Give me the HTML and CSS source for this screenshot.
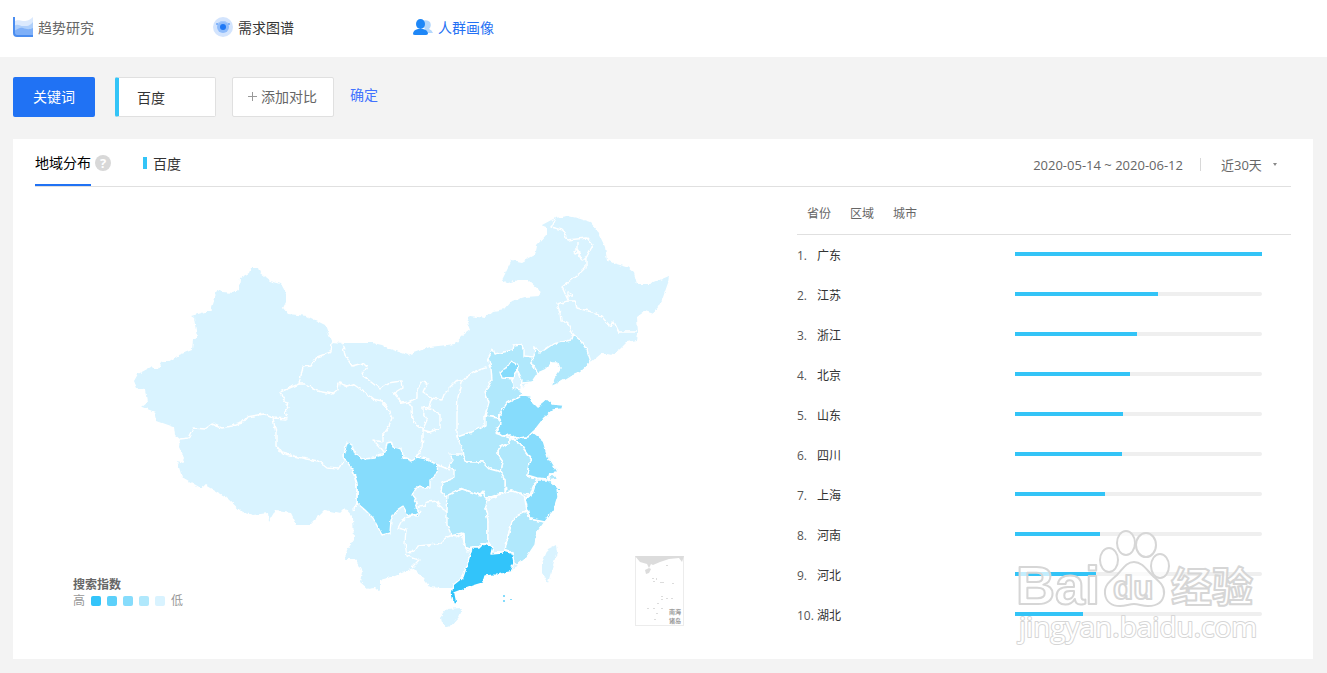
FILE: index.html
```html
<!DOCTYPE html>
<html lang="zh-CN">

<head>
    <meta charset="UTF-8">
    <meta name="viewport" content="width=device-width, initial-scale=1.0">
    <title>人群画像</title>
    <link rel="stylesheet" href="styles.css">
</head>

<body>

    <nav class="nav">
        <a href="#" class="nav-item muted">
            <svg width="20" height="20" viewBox="0 0 20 20">
                <path fill="#dbe9fd" d="M1 5c4-3 6-1 9-1s6 0 10-4v18H1z" />
                <path fill="#aecffb" d="M1 9c4-3 6 0 9 0s6 1 10-4v12H1z" />
                <path fill="#7fb0f8" d="M1 14c4-2 6-4 9-3s6 2 10 0v8H1z" />
                <path fill="none" stroke="#4a8df0" stroke-width="2" d="M1 0v16q0 3 3 3h16" />
            </svg>
            趋势研究
        </a>
        <a href="#" class="nav-item">
            <svg width="20" height="20" viewBox="0 0 20 20">
                <circle cx="10" cy="10" r="10" fill="#d3e4fd" />
                <circle cx="10" cy="10" r="6" fill="#8fbcfb" />
                <circle cx="10" cy="10" r="3" fill="#1f78f5" />
                <path fill="none" stroke="#a9cbfb" d="M4 7q6-5 12 0" />
                <circle cx="4" cy="7" r="1" fill="#6fa8f8" />
                <circle cx="16" cy="7" r="1" fill="#6fa8f8" />
            </svg>
            需求图谱
        </a>
        <a href="#" class="nav-item active">
            <svg width="20" height="20" viewBox="0 0 20 20">
                <path fill="#b5d8fc" d="M9 4q5-2 8 1 2 4-1 7 3 1 4 4h-7z" />
                <ellipse cx="7.500" cy="7" rx="4.500" ry="5" fill="#1e87f7" />
                <path fill="#1e87f7" d="M0 17q0-4 5-5h5q5 1 5 5-1 1-2 1H2q-2 0-2-1z" />
            </svg>
            人群画像
        </a>
    </nav>

    <form class="search">
        <button type="button" class="btn-key">关键词</button>
        <input type="text" class="word" value="百度" aria-label="关键词">
        <button type="button" class="btn-add">
            <svg width="10" height="10" viewBox="0 0 10 10"><path fill="none" stroke="#999" d="M5.500 1v9M1 5.500h9" /></svg>
            添加对比
        </button>
        <a href="#" class="confirm">确定</a>
    </form>

    <div class="panel">
        <div class="panel-head">
            <h3 class="title">地域分布</h3>
            <button type="button" class="help" aria-label="说明">?</button>
            <span class="series">百度</span>
            <div class="period">
                <span>2020-05-14 ~ 2020-06-12</span>
                <i class="line"></i>
                <select class="days" aria-label="时间">
                    <option>近30天</option>
                </select>
                <i class="caret"></i>
            </div>
        </div>

        <div class="content">
            <div class="map-box">
                <svg class="map" viewBox="125 205 560 435">
                    <defs>
                        <filter id="rough" x="0" y="0" width="100%" height="100%">
                            <feTurbulence type="fractalNoise" baseFrequency="0.2" numOctaves="2" seed="4" />
                            <feDisplacementMap in="SourceGraphic" scale="4" xChannelSelector="R" yChannelSelector="G" />
                        </filter>
                    </defs>
                    <g filter="url(#rough)">
                        <!-- mainland -->
                        <path class="l1" d="M134 381L138 374 151 367 153 369 158 369 162 362 168 362 179 355 192 350 193 340 197 337 194 318 191 316 205 312 212 312 211 307 217 290 222 292 234 293 239 290 240 278 249 273 251 268 258 268 260 273 270 281 281 284 286 293 286 302 283 308 288 314 307 316 325 325 328 333 332 342 342 343 353 343 373 343 382 345 390 349 408 355 430 347 455 344 462 336 470 330 467 322 470 316 485 318 493 311 505 309 512 301 525 297 540 296 539 290 528 280 518 280 507 283 502 280 512 260 522 262 535 255 537 245 547 234 547 227 542 225 555 218 568 216 577 218 590 222 597 230 605 247 607 260 613 263 627 267 634 273 637 284 650 284 669 276 668 283 662 300 654 314 645 311 637 317 638 333 637 340 627 342 620 349 612 355 602 353 590 363 580 372 570 376 555 385 551 387 554 378 560 369 558 363 552 363 545 370 538 373 532 382 525 384 521 390 522 395 531 396 533 403 537 407 547 399 553 404 563 405 562 409 553 410 545 418 533 432 543 442 548 455 553 465 557 470 552 473 557 479 550 481 557 488 558 495 555 508 545 522 537 533 533 547 517 565 510 572 485 575 483 583 455 593 457 603 452 603 451 593 452 588 440 588 430 587 423 578 413 568 395 576 380 580 380 592 375 588 368 589 360 582 362 572 355 559 345 559 347 550 354 540 353 517 345 508 340 513 325 510 310 525 297 525 291 513 275 511 269 521 268 513 253 515 242 512 227 498 205 485 201 488 182 477 177 461 182 463 184 458 179 447 180 439 175 435 174 427 157 421 155 412 142 407 147 403 145 389 137 388z" />
                        <!-- hainan, taiwan -->
                        <path class="l1" d="M462 608L458 617 449 627 442 624 441 617 447 609zM556 545L557 552 553 565 548 583 542 573 542 563 548 549z" />
                        <g class="provinces">
                            <!-- hebei -->
                            <path class="l2" d="M493 349L495 354 513 350 514 345 521 344 524 350 524 356 533 357 531 362 538 373 532 382 523 383 521 390 522 395 517 398 507 403 499 416 498 418 485 416 489 402 485 392 492 380 491 368 488 358z" />
                            <!-- liaoning -->
                            <path class="l2" d="M535 347L540 353 553 344 571 340 573 334 580 340 587 350 591 362 580 372 570 376 555 385 551 387 554 378 560 369 558 363 552 363 545 370 538 373 531 362 534 357z" />
                            <!-- henan -->
                            <path class="l2" d="M457 437L472 432 485 425 485 416 498 418 501 424 495 433 510 438 510 443 500 447 497 453 503 462 501 472 490 469 483 462 465 462 463 450z" />
                            <!-- anhui -->
                            <path class="l2" d="M510 438L520 443 528 455 532 460 529 463 527 475 537 478 533 487 530 495 522 494 512 491 506 492 505 480 501 472 503 462 497 453 500 447 510 443z" />
                            <!-- hubei -->
                            <path class="l2" d="M450 454L463 454 465 462 483 462 490 469 501 472 505 480 505 492 488 498 480 495 462 489 457 493 447 497 441 492 442 483 454 478 454 470 449 466 453 460z" />
                            <!-- hunan -->
                            <path class="l2" d="M448 495L462 489 480 495 483 492 488 502 485 508 488 520 488 543 482 544 479 547 472 547 468 551 465 547 464 533 457 537 452 536 447 525 447 510z" />
                            <!-- jiangxi -->
                            <path class="l1" d="M488 500L505 492 512 491 522 494 525 500 527 511 517 516 512 522 508 537 505 551 491 554 493 546 488 543 488 520 485 508z" />
                            <!-- fujian -->
                            <path class="l2" d="M527 511L530 519 545 522 537 533 535 545 527 557 517 565 514 563 512 553 505 550 508 537 512 522 517 516z" />
                            <!-- shandong -->
                            <path class="l3" d="M522 395L531 396 533 403 537 407 547 399 553 404 563 405 562 409 553 410 545 417 535 430 528 437 517 438 510 435 502 436 496 431 501 424 499 416 507 403 517 398z" />
                            <!-- jiangsu -->
                            <path class="l3" d="M510 436L517 438 528 437 533 432 543 440 548 457 554 467 557 472 550 473 548 479 537 478 527 475 529 463 532 460 527 453 520 443z" />
                            <!-- shanghai -->
                            <path class="l2" d="M551 473L558 479 549 481z" />
                            <!-- zhejiang -->
                            <path class="l3" d="M538 480L548 480 557 488 558 497 554 510 545 522 530 519 527 507 525 498 532 495 535 485z" />
                            <!-- beijing, tianjin -->
                            <path class="l3" d="M511 361L518 365 517 373 513 379 502 378 500 372 507 367z" />
                            <path class="l1" d="M516 373L518 371 522 380 521 390 513 388 512 379z" />
                            <!-- sichuan -->
                            <path class="l3" d="M347 442L352 445 355 454 363 459 375 458 378 455 385 453 387 443 391 442 393 447 402 449 403 457 412 461 417 457 427 459 438 465 437 473 430 480 430 488 417 487 412 495 417 502 415 508 420 512 418 516 408 515 403 506 397 510 391 520 390 533 382 535 373 518 365 510 357 503 357 483 352 468 345 460 343 455 345 450z" />
                            <!-- guangdong -->
                            <path class="l5" d="M472 547L479 547 482 544 493 546 491 554 502 553 504 551 512 553 514 563 510 572 497 575 485 576 483 583 473 586 455 593 457 603 453 603 451 594 453 585 463 577 467 565z" />
                        </g>
                        <g class="borders">
                            <path d="M180 439L188 438 193 428 205 429 212 424 222 428 232 426 242 423 247 417 263 414 273 418 287 419 285 412 289 407 282 397 280 392 299 384 303 367 311 366 317 357 331 352 332 343" />
                            <path d="M299 384L305 384 317 391 333 394 338 390 339 383 347 386 353 384 363 391 373 399 382 401 387 407 392 418 388 428 383 435 383 442 373 440 380 447 384 452" />
                            <path d="M273 418L276 433 276 445 282 453 302 458 318 461 327 468 338 469 343 462M353 470L357 487 357 503 353 511" />
                            <path d="M342 343L345 355 352 366 363 363 367 367 362 375 380 389 388 383 401 381 402 388 394 393 402 403 408 402 417 398 417 390 422 382 427 383 423 392 432 398 442 400 445 392 455 382 463 380 473 372 488 367" />
                            <path d="M408 402L412 408 413 422 423 429 427 420 423 413 423 407 429 406 432 398M425 408L433 410 440 415 440 428 430 432 423 430 423 437 422 447 417 457" />
                            <path d="M463 380L458 397 457 413 457 437M438 465L450 470" />
                            <path d="M420 512L402 520 398 528 406 530 405 543 407 556 419 560 412 567M407 552L415 551 418 546 438 544 447 537 462 533 465 547 472 550M415 508L425 506 427 502 437 501 440 507 447 512" />
                            <path d="M555 218L551 227 563 230 567 240 587 238 593 245 586 258 586 267 580 273 562 287 568 300M577 242V250L582 260 586 258M574 251l3-2 2 3-4 2zM568 292l3 1 1 3-4 0z" />
                            <path d="M573 334L567 322 561 322 560 312 557 304 568 301 575 301 577 308 592 312 602 317 610 326 614 322 619 332 637 332" />
                        </g>
                    </g>
                    <path class="l3" d="M503 595h2v2h-2zM503 600h2v2h-2zM510 599h2v1h-2zM558 489h2v1h-2z" />

                    <!-- south china sea inset -->
                    <rect x="635.500" y="556.500" width="48" height="69" fill="#fff" stroke="#ececec" />
                    <path fill="#dcdcdc" d="M635 556h49l-2 6-3-4-10 1-9 3-7 3-2-1-2 4-2-4-7-2z" />
                    <path fill="#dcdcdc" d="M645 570l4-2 2 1-2 4-3 1zM666 565h2v1h-2zM652 578h2v1h-2zM656 578h1v2h-1zM653 581h2v1h-2zM660 582h4v1h-4zM672 583h2v1h-2zM661 596h2v1h-2zM666 598h2v1h-2zM671 598h2v1h-2zM661 599h2v1h-2zM657 603h2v1h-2zM647 608h2v1h-2zM653 608h2v1h-2zM661 608h2v1h-2zM656 613h2v1h-2zM654 619h2v1h-2z" />
                    <text class="inset-text" x="669" y="614">南海</text>
                    <text class="inset-text" x="669" y="623">诸岛</text>
                </svg>
                <div class="legend">
                    <b>搜索指数</b>
                    <div class="scale">
                        <span>高</span>
                        <i class="c5"></i>
                        <i class="c4"></i>
                        <i class="c3"></i>
                        <i class="c2"></i>
                        <i class="c1"></i>
                        <span>低</span>
                    </div>
                </div>
            </div>

            <div class="rank">
                <div class="tabs">
                    <button type="button">省份</button>
                    <button type="button">区域</button>
                    <button type="button">城市</button>
                </div>
                <ul class="list">
                    <li><span class="num">1.</span><span class="name">广东</span><div class="bar"><div style="width: 100%"></div></div></li>
                    <li><span class="num">2.</span><span class="name">江苏</span><div class="bar"><div style="width: 58%"></div></div></li>
                    <li><span class="num">3.</span><span class="name">浙江</span><div class="bar"><div style="width: 49.4%"></div></div></li>
                    <li><span class="num">4.</span><span class="name">北京</span><div class="bar"><div style="width: 46.6%"></div></div></li>
                    <li><span class="num">5.</span><span class="name">山东</span><div class="bar"><div style="width: 43.8%"></div></div></li>
                    <li><span class="num">6.</span><span class="name">四川</span><div class="bar"><div style="width: 43.3%"></div></div></li>
                    <li><span class="num">7.</span><span class="name">上海</span><div class="bar"><div style="width: 36.5%"></div></div></li>
                    <li><span class="num">8.</span><span class="name">河南</span><div class="bar"><div style="width: 34.5%"></div></div></li>
                    <li><span class="num">9.</span><span class="name">河北</span><div class="bar"><div style="width: 32.8%"></div></div></li>
                    <li><span class="num">10.</span><span class="name">湖北</span><div class="bar"><div style="width: 27.6%"></div></div></li>
                </ul>
            </div>
        </div>

        <svg class="watermark" width="255" height="125" viewBox="1010 525 255 125">
            <ellipse cx="1109" cy="560" rx="9" ry="12" />
            <ellipse cx="1126" cy="543" rx="9" ry="12" />
            <ellipse cx="1146" cy="545" rx="10" ry="12" />
            <ellipse cx="1160" cy="566" rx="9" ry="12" />
            <path d="M1134 562c-8 0-11 7-17 13-7 6-13 10-12 19 1 8 7 12 15 12 6 0 9-2 14-2s8 2 14 2c9 0 15-4 16-12 1-9-6-13-12-19-6-6-10-13-18-13z" />
            <text class="bai" x="1016" y="604">Bai</text>
            <text class="du" x="1113" y="599">du</text>
            <text class="jy" x="1171" y="602">经验</text>
            <text class="site" x="1019" y="637">jingyan.baidu.com</text>
        </svg>
    </div>

</body>

</html>
```
FILE: styles.css
```css
*{
    margin: 0;
    padding: 0;
    box-sizing: border-box;
}
body{
    background: #f3f3f3;
    font-family: "Open Sans", "Noto Sans CJK SC", sans-serif;
    font-size: 14px;
    color: #333;
}
a{
    text-decoration: none;
}
button, input, select{
    font: inherit;
    color: inherit;
}
button{
    border: none;
    background: none;
    cursor: pointer;
}
.nav{
    display: flex;
    height: 57px;
    padding: 0 13px 3px;
    background: #fff;
}
.nav-item{
    display: flex;
    align-items: center;
    gap: 5px;
    width: 200px;
    color: #333;
}
.nav-item.muted{
    color: #666;
}
.nav-item.active{
    color: #2470f3;
}
.search{
    display: flex;
    align-items: center;
    padding: 20px 13px 22px;
}
.search .btn-key{
    width: 82px;
    height: 40px;
    margin-right: 20px;
    padding-bottom: 2px;
    border-radius: 2px;
    background: #2072f4;
    color: #fff;
}
.word{
    width: 101px;
    height: 40px;
    margin-right: 16px;
    padding-left: 18px;
    border: 1px solid #e0e0e0;
    border-left: 4px solid #33c4f7;
    border-radius: 2px;
    background: #fff;
}
.btn-add{
    display: flex;
    align-items: center;
    justify-content: center;
    gap: 4px;
    width: 102px;
    height: 40px;
    margin-right: 16px;
    padding: 0 2px 2px 0;
    border: 1px solid #e0e0e0;
    border-radius: 2px;
    background: #fff;
    color: #666;
}
.confirm{
    padding-bottom: 6px;
    color: #4273ff;
}
.panel{
    position: relative;
    margin: 0 14px 14px 13px;
    padding: 0 22px 19px;
    background: #fff;
}
.panel-head{
    display: flex;
    align-items: center;
    height: 48px;
    border-bottom: 1px solid #e0e0e0;
}
.title{
    height: 47px;
    line-height: 48px;
    border-bottom: 2px solid #2072f4;
    font-size: 14px;
    font-weight: normal;
    color: #000;
}
.help{
    width: 16px;
    height: 16px;
    margin: 0 32px 0 4px;
    border-radius: 50%;
    background: #d8d8d8;
    color: #fff;
    font-size: 13px;
    font-weight: bold;
    line-height: 16px;
}
.series{
    display: flex;
    align-items: center;
    gap: 6px;
}
.series::before{
    content: "";
    width: 4px;
    height: 12px;
    background: #33c4f7;
}
.period{
    display: flex;
    align-items: center;
    margin-left: auto;
    padding: 4px 14px 0 0;
    font-size: 13px;
    color: #666;
}
.period .line{
    width: 1px;
    height: 13px;
    margin: 0 20px 0 17px;
    background: #d8d8d8;
}
.days{
    width: 52px;
    border: none;
    background: none;
    appearance: none;
}
.caret{
    border: 2px solid transparent;
    border-top: 3px solid #888;
    border-bottom: none;
}
.content{
    display: grid;
    grid-template-columns: 762fr 494fr;
}
.map-box{
    position: relative;
    padding: 18px 112px 0 90px;
}
.map{
    display: block;
    width: 100%;
}
.l1{
    fill: #d9f3ff;
}
.l2{
    fill: #b0e8fc;
}
.l3{
    fill: #86dcfc;
}
.l5{
    fill: #33c4fa;
}
.provinces path, .borders path{
    stroke: #fff;
    stroke-width: 1.4;
    stroke-linejoin: round;
}
.borders path{
    fill: none;
}
.inset-text{
    font-size: 6px;
    font-weight: bold;
    fill: #999;
}
.legend{
    position: absolute;
    left: 38px;
    bottom: 31px;
    font-size: 12px;
    line-height: 16px;
    color: #666;
}
.scale{
    display: flex;
    align-items: center;
    gap: 6px;
    color: #999;
}
.scale i{
    width: 10px;
    height: 10px;
    border-radius: 2px;
}
.c5{
    background: #33c4fa;
}
.c4{
    background: #5cd0fa;
}
.c3{
    background: #86dcfc;
}
.c2{
    background: #b0e8fc;
}
.c1{
    background: #d9f3ff;
}
.tabs{
    display: flex;
    align-items: center;
    gap: 19px;
    height: 48px;
    padding: 4px 10px 0;
    border-bottom: 1px solid #e0e0e0;
    font-size: 12px;
    color: #666;
}
.list{
    list-style: none;
    font-size: 12px;
}
.list li{
    display: flex;
    align-items: center;
    height: 40px;
    padding-right: 29px;
}
.num{
    width: 20px;
    color: #555;
}
.name{
    width: 198px;
}
.bar{
    flex: 1;
    height: 4px;
    margin-bottom: 2px;
    border-radius: 2px;
    background: #efefef;
}
.bar div{
    height: 4px;
    background: #33c4f7;
}
.watermark{
    position: absolute;
    right: 48px;
    bottom: 9px;
    pointer-events: none;
    fill: #fff;
    fill-opacity: 0.7;
    stroke: #d6d6d6;
    stroke-width: 2;
    stroke-linejoin: round;
}
.watermark text{
    font-weight: bold;
}
.watermark .bai{
    font-family: "Liberation Sans", sans-serif;
    font-size: 54px;
}
.watermark .du{
    font-family: "Liberation Sans", sans-serif;
    font-size: 33px;
}
.watermark .jy{
    font-size: 41px;
}
.watermark .site{
    font-size: 28px;
    font-weight: normal;
    paint-order: stroke;
    fill-opacity: 1;
}
```
